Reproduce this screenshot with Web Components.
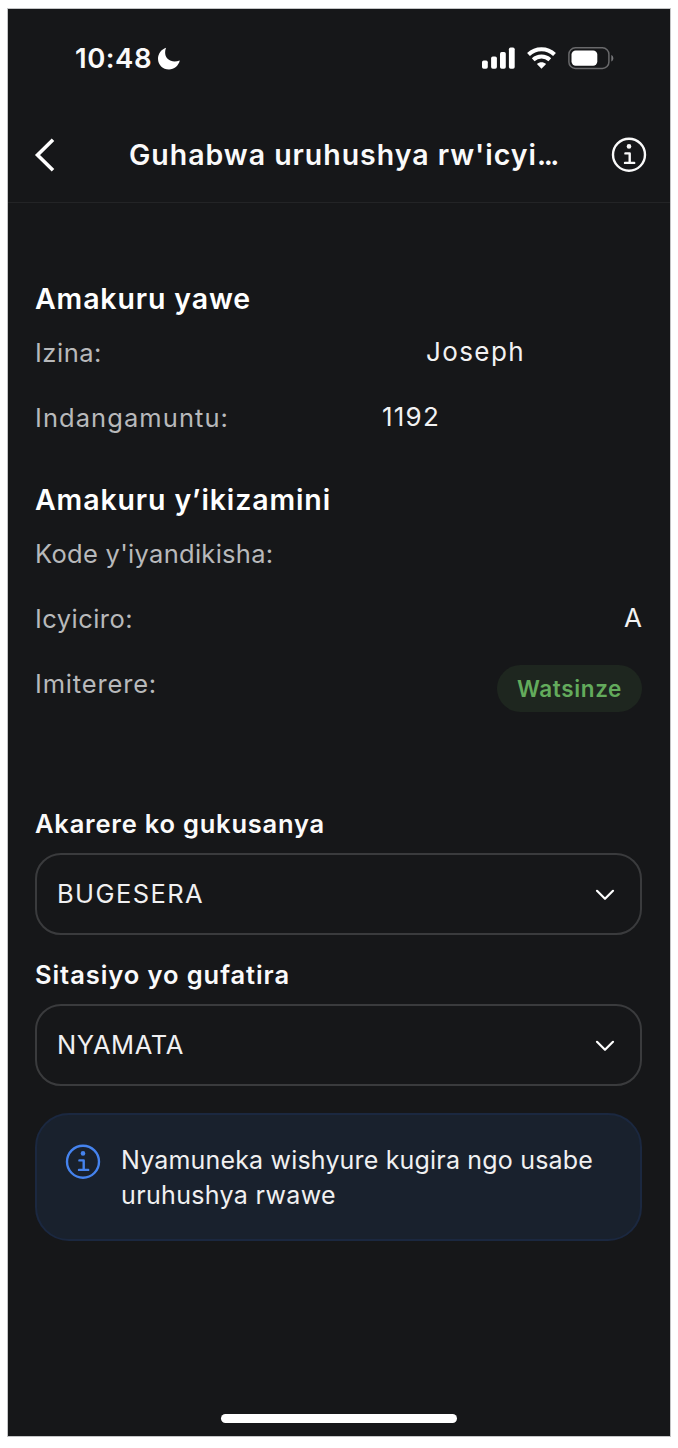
<!DOCTYPE html>
<html lang="rw">
<head>
<meta charset="utf-8">
<title>Guhabwa uruhushya</title>
<style>
html, body { margin: 0; background: #fff; }
body { font-family: Inter, Roboto, "Liberation Sans", sans-serif; color: #fafafa; height: 1448px; overflow: hidden; }
</style>
</head>
<body>
<phone-screen>
  <status-bar slot="status" time="10:48"></status-bar>
  <nav-header slot="header"><fit-text width="408">Guhabwa uruhushya rw'icyi</fit-text><fit-text width="20">...</fit-text></nav-header>
  <info-section>
    <fit-text slot="title" width="216">Amakuru yawe</fit-text>
    <info-row inset="117"><fit-text slot="label" width="67">Izina:</fit-text><fit-text width="99">Joseph</fit-text></info-row>
    <info-row inset="202"><fit-text slot="label" width="194">Indangamuntu:</fit-text><fit-text width="58">1192</fit-text></info-row>
  </info-section>
  <info-section>
    <fit-text slot="title" width="296">Amakuru y’ikizamini</fit-text>
    <info-row><fit-text slot="label" width="238.5">Kode y'iyandikisha:</fit-text></info-row>
    <info-row><fit-text slot="label" width="98">Icyiciro:</fit-text><fit-text width="18">A</fit-text></info-row>
    <info-row><fit-text slot="label" width="122">Imiterere:</fit-text><status-badge><fit-text width="105">Watsinze</fit-text></status-badge></info-row>
  </info-section>
  <select-field style="margin-top:89.25px"><fit-text slot="label" width="290">Akarere ko gukusanya</fit-text><fit-text width="147">BUGESERA</fit-text></select-field>
  <select-field><fit-text slot="label" width="255">Sitasiyo yo gufatira</fit-text><fit-text width="127">NYAMATA</fit-text></select-field>
  <info-notice><fit-text width="472">Nyamuneka wishyure kugira ngo usabe</fit-text><fit-text width="215">uruhushya rwawe</fit-text></info-notice>
</phone-screen>
<script>
const define = (name, html, setup) => {
  const tpl = document.createElement('template');
  tpl.innerHTML = html;
  customElements.define(name, class extends HTMLElement {
    constructor() {
      super();
      this.attachShadow({ mode: 'open' }).append(tpl.content.cloneNode(true));
    }
    connectedCallback() { if (setup) setup(this, this.shadowRoot); }
  });
};

define('phone-screen', `
<style>
:host { display: flex; flex-direction: column; box-sizing: border-box; width: 662px; height: 1427px; margin: 9px 8px 0; background: #161719; box-shadow: 0 0 0 1px #c4c5c6; }
main { flex: 1; padding: 75px 28px 0 27px; }
.home { align-self: center; width: 236px; height: 9px; border-radius: 5px; background: #fff; margin: 0 0 13px; }
</style>
<slot name="status"></slot><slot name="header"></slot>
<main><slot></slot></main><div class="home"></div>`);

define('status-bar', `
<style>
:host { display: flex; align-items: center; height: 99px; padding: 0 55px 0 67px; font-size: 27.500px; font-weight: 560; }
.moon { margin-left: 5px; }
fit-text { margin-top: -1px; }
.icons { margin-left: auto; display: flex; align-items: center; }
svg { display: block; }
</style>
<fit-text width="77"></fit-text>
<svg class="moon" width="24" height="24" viewBox="0 .5 24 24"><path d="M9.100 1.200C7.400 5.300 8 9.800 10.900 12.600c2.900 2.800 7.400 3.200 11.900 1.400C21.500 19.200 17.200 23 12 23 5.800 23 1 18.200 1 12.200 1 7.200 4.300 2.700 9.100 1.200z" fill="#fff"/></svg>
<div class="icons">
<svg width="34" height="24" viewBox="0 0 34 24" fill="#fff"><rect x="1" y="13.500" width="5.800" height="8.300" rx="1.700"/><rect x="10.100" y="9.500" width="5.800" height="12.300" rx="1.700"/><rect x="19" y="5.100" width="5.800" height="16.700" rx="1.700"/><rect x="27.900" y=".6" width="5.800" height="21.200" rx="1.700"/></svg>
<svg style="margin-left:11px" width="30" height="24" viewBox="-.5 .8 30 24"><g fill="none" stroke="#fff" stroke-width="4.100"><path d="M2 8.300C9.200 1.300 20.800 1.300 28 8.300"/><path d="M6.700 13.500C11.400 9.300 18.600 9.300 23.300 13.500"/></g><path d="M15 22.500l-4.600-4.700c2.700-2.200 6.500-2.200 9.200 0z" fill="#fff"/></svg>
<svg style="margin-left:11px" width="48" height="24" viewBox="0 1 48 24"><rect x="1.900" y="1.800" width="40" height="20.600" rx="6.500" fill="none" stroke="#69696b" stroke-width="1.500"/><rect x="4.500" y="4.400" width="25.800" height="15.400" rx="4.200" fill="#fff"/><path d="M44.300 9v6.600c1.300-.6 2-1.800 2-3.300s-.7-2.700-2-3.300z" fill="#77777a"/></svg>
</div>`, (host, root) => { root.querySelector('fit-text').textContent = host.getAttribute('time'); });

define('info-icon', `
<style>:host { display: block; flex: none; width: 36px; height: 36px; } svg { display: block; }</style>
<svg width="36" height="36" viewBox="-18 -17.700 36 36" fill="none" stroke="currentColor" stroke-width="2.400" stroke-linecap="round" stroke-linejoin="round"><circle r="16"/><circle cx="0" cy="-8.300" r="2.300" fill="currentColor" stroke="none"/><path d="M-3.600 -1.300H.7V8.200M-4 8.200H5.200"/></svg>`);

define('nav-header', `
<style>
:host { display: flex; align-items: center; height: 94px; border-bottom: 1px solid #232426; padding: 0 23px 0 26px; font-size: 28.500px; font-weight: 600; }
.back { flex: none; }
.title { flex: 1; padding: 0 0 2px 73px; white-space: nowrap; }
</style>
<svg class="back" width="22" height="36" viewBox="0 0 22 36"><path d="M19 2.700L3.500 18 19 33.300" fill="none" stroke="#fff" stroke-width="3.600"/></svg>
<div class="title"><slot></slot></div>
<info-icon></info-icon>`);

define('info-section', `
<style>
:host { display: block; margin-bottom: 28px; }
h2 { display: flex; align-items: center; height: 41px; margin: 0 0 1px; font-size: 28.500px; font-weight: 600; color: #fff; }
</style>
<h2><slot name="title"></slot></h2><slot></slot>`);

define('info-row', `
<style>
:host { display: flex; align-items: center; justify-content: space-between; height: 65.250px; font-size: 25.500px; }
.label { color: #b8b9bb; }
.value { color: #f2f2f3; padding-bottom: 2px; font-size: 26px; }
</style>
<span class="label"><slot name="label"></slot></span><span class="value"><slot></slot></span>`,
(host, root) => { root.querySelector('.value').style.paddingRight = (host.getAttribute('inset') || 0) + 'px'; });

define('status-badge', `
<style>
:host { display: flex; align-items: center; justify-content: center; width: 145px; height: 47px; margin-top: 11px; border-radius: 24px; background: #1e261f; color: #63ab5c; font-size: 22.500px; font-weight: 600; }
</style><slot></slot>`);

define('select-field', `
<style>
:host { display: block; margin-bottom: 22px; }
.label { display: flex; align-items: center; height: 35px; padding-bottom: 1px; font-size: 25.500px; font-weight: 580; }
.box { box-sizing: border-box; display: flex; align-items: center; justify-content: space-between; height: 82px; margin-top: 11px; padding: 0 24px 0 20px; border: 2px solid #3a3b3d; border-radius: 26px; font-size: 25.500px; color: #f0f0f1; }
</style>
<div class="label"><slot name="label"></slot></div>
<div class="box"><slot></slot><svg width="22" height="14" viewBox="0 0 22 14"><path d="M3 3.800L11 11.800 19 3.800" fill="none" stroke="#fff" stroke-width="2.200" stroke-linecap="round" stroke-linejoin="round"/></svg></div>`);

define('info-notice', `
<style>
:host { box-sizing: border-box; display: flex; align-items: flex-start; height: 128px; margin-top: 27px; padding: 29px 27px 0 28px; border: 2px solid #1b2840; border-radius: 34px; background: #19212d; font-size: 25px; line-height: 35px; color: #f0f0f1; }
info-icon { color: #4583ee; }
.text { display: flex; flex-direction: column; align-items: flex-start; padding-left: 20px; margin-top: -1px; }
</style>
<info-icon></info-icon><div class="text"><slot></slot></div>`);

// A single line whose tracking is adjusted so that it spans the given width.
define('fit-text', `
<style>:host { display: inline-block; white-space: nowrap; } span { display: inline-block; }</style>
<span><slot></slot></span>`);
for (const root of [document, ...[...document.querySelectorAll('*')].map(e => e.shadowRoot).filter(Boolean)]) {
  for (const el of root.querySelectorAll('fit-text')) {
    const n = [...el.textContent].length;
    const natural = el.shadowRoot.querySelector('span').getBoundingClientRect().width;
    el.style.letterSpacing = ((+el.getAttribute('width') - natural) / n).toFixed(3) + 'px';
  }
}
</script>
</body>
</html>
